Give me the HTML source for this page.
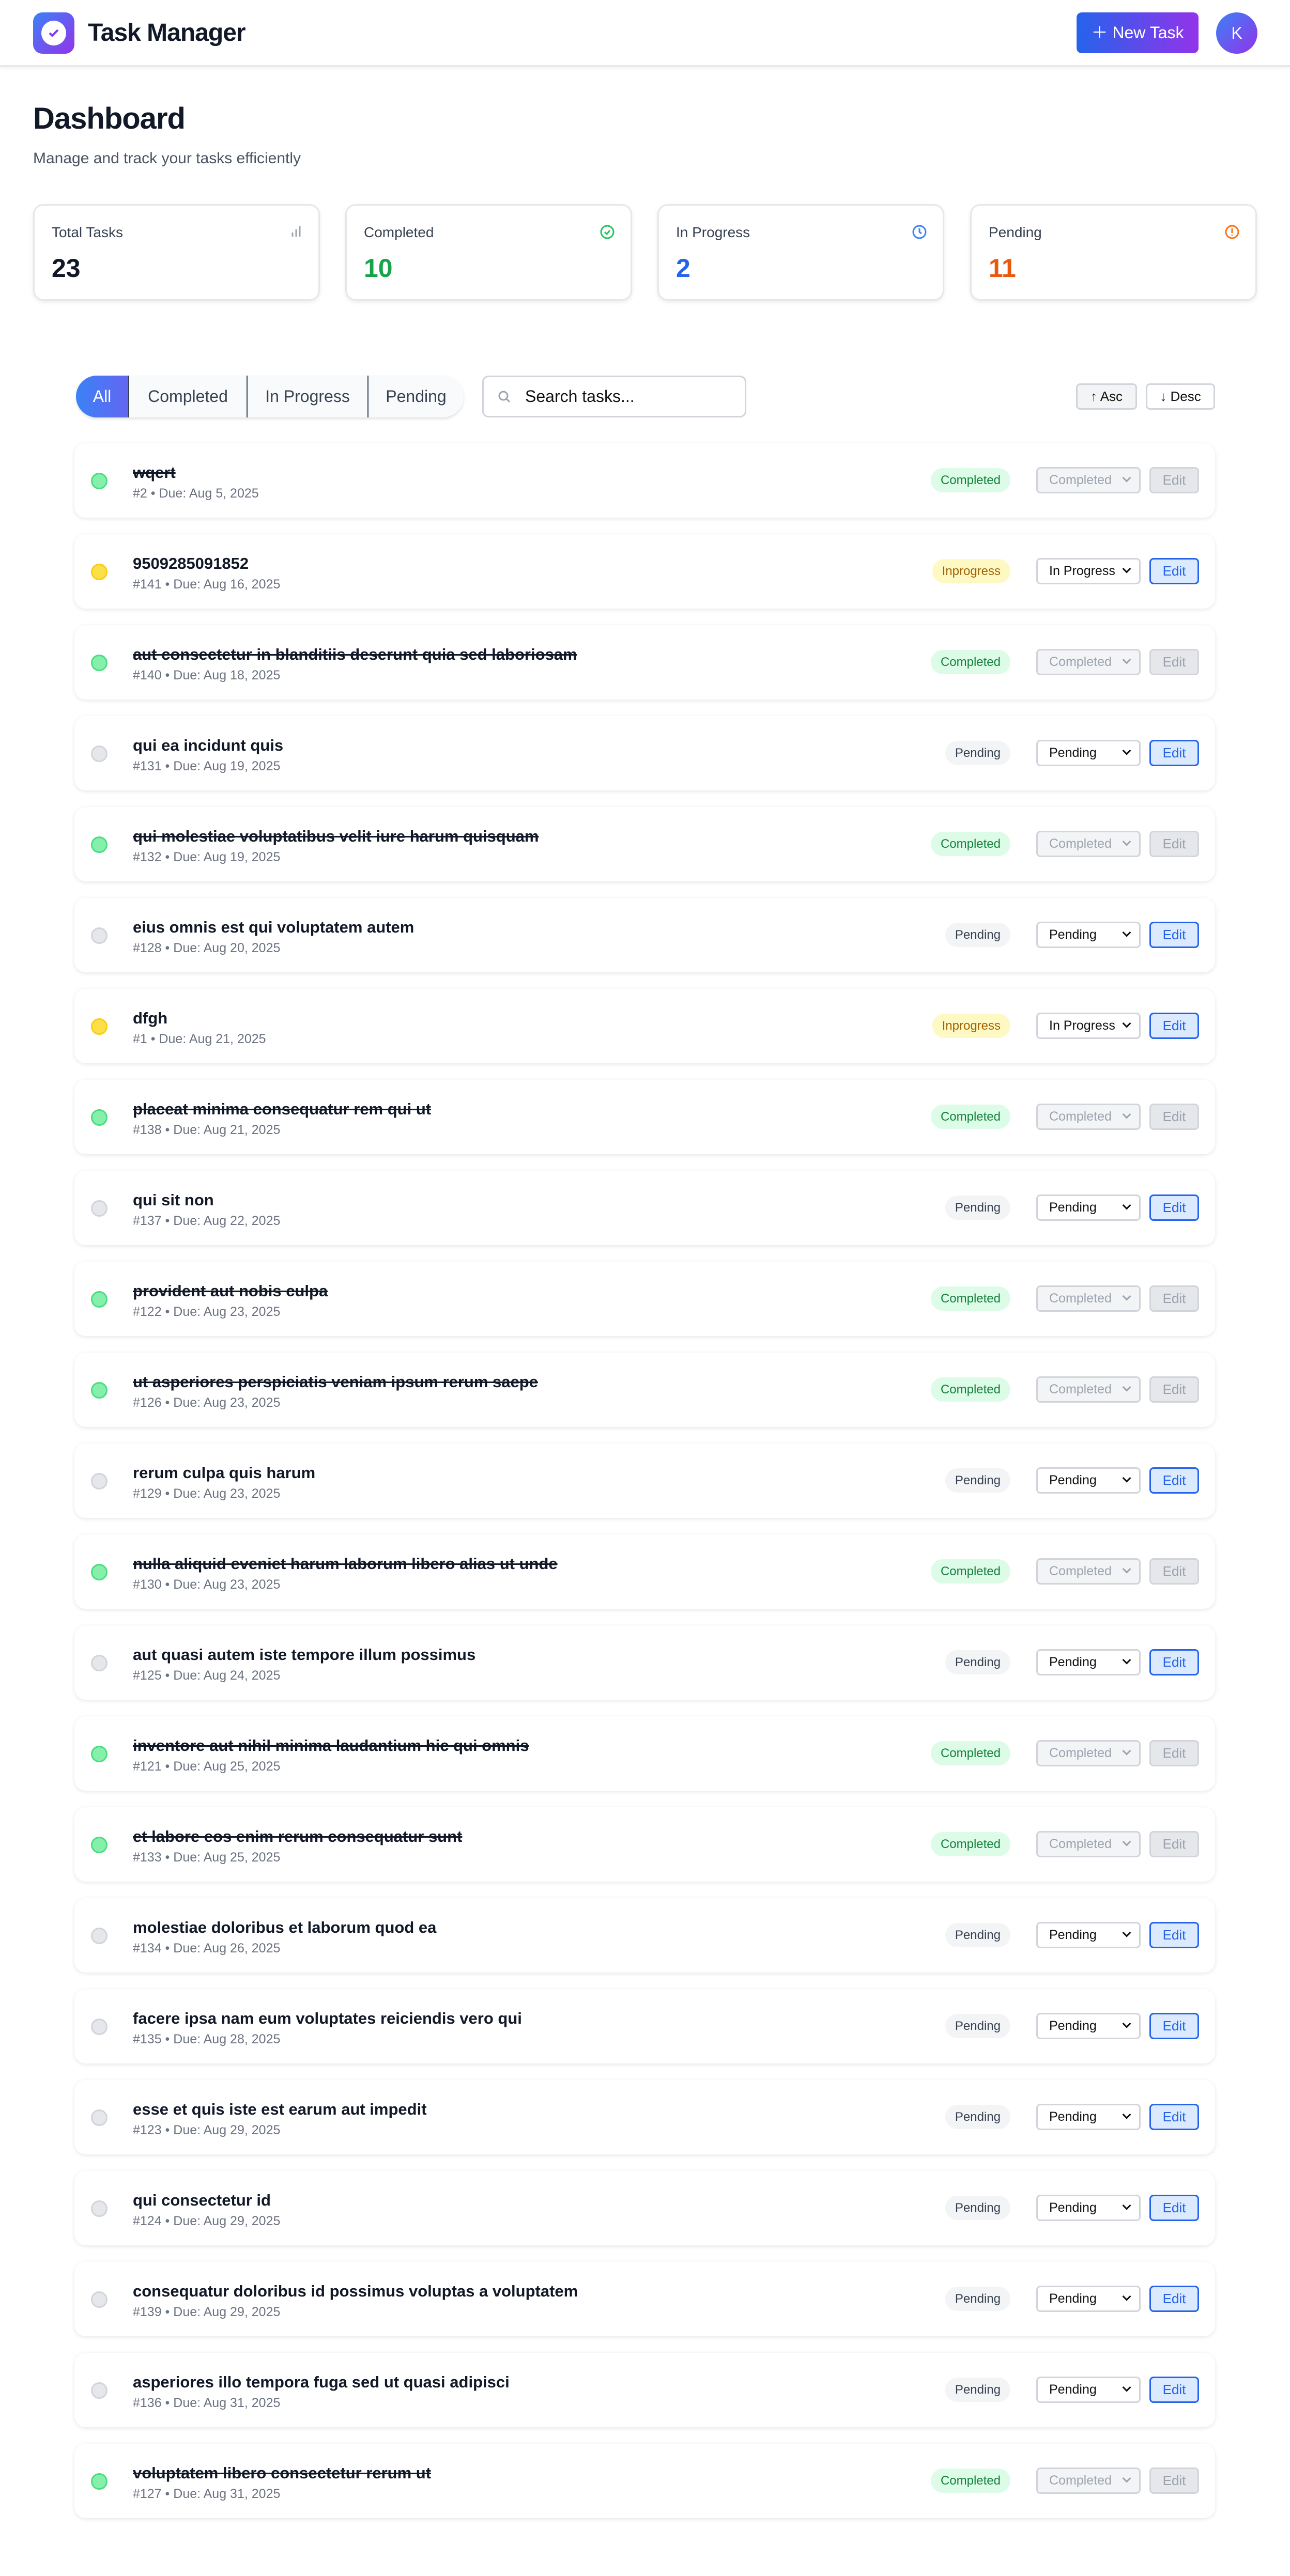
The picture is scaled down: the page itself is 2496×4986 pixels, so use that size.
<!DOCTYPE html>
<html><head><meta charset="utf-8"><style>
*{box-sizing:border-box;margin:0;padding:0}
body{width:2496px;height:4986px;background:#fff;font-family:"Liberation Sans",Arial,sans-serif;position:relative;overflow:hidden;color:#111827}
.hdr{position:absolute;left:0;top:0;width:2496px;height:129px;background:#fff;border-bottom:3px solid #e5e7eb;box-shadow:0 3px 6px rgba(0,0,0,.06)}
.logo{position:absolute;left:64px;top:24px;width:80px;height:80px;border-radius:18px;background:linear-gradient(135deg,#3b82f6,#9333ea)}
.logo i{position:absolute;left:16px;top:16px;width:48px;height:48px;border-radius:50%;background:#fff}
.ttl{position:absolute;left:170px;top:36px;font-size:48px;font-weight:bold;letter-spacing:-1px}
.nb{position:absolute;left:2083px;top:24px;width:236px;height:79px;border-radius:10px;background:linear-gradient(90deg,#2563eb,#9333ea);color:#fff;font-size:32px;line-height:79px;text-align:center}
.av{position:absolute;left:2353px;top:24px;width:80px;height:80px;border-radius:50%;background:linear-gradient(135deg,#3b82f6,#9333ea);color:#fff;font-size:32px;line-height:80px;text-align:center}
h1{position:absolute;left:64px;top:196px;font-size:58px;font-weight:bold;letter-spacing:-1px}
.sub{position:absolute;left:64px;top:290px;font-size:30px;color:#4b5563}
.st{position:absolute;top:395px;width:555px;height:187px;border:3px solid #e5e7eb;border-radius:20px;box-shadow:0 3px 8px rgba(0,0,0,.08);background:#fff}
.st .l{position:absolute;left:33px;top:36px;font-size:28px;color:#374151}
.st .n{position:absolute;left:33px;top:92px;font-size:50px;font-weight:bold}
.st svg{position:absolute;right:30px;top:36px}
.fg{position:absolute;left:147px;top:727px;width:750px;height:81px;border-radius:41px;background:#f8fafc;box-shadow:0 3px 6px rgba(0,0,0,.12);overflow:hidden;font-size:32px;color:#374151}
.fg span{position:absolute;top:0;height:81px;line-height:81px;text-align:center}
.sr{position:absolute;left:933px;top:727px;width:511px;height:81px;border:3px solid #d1d5db;border-radius:12px;font-size:32px;line-height:75px;padding-left:80px;color:#111}
.sb{position:absolute;top:742px;height:51px;border:3px solid #d1d5db;border-radius:8px;font-size:26px;line-height:45px;text-align:center;color:#111}
.c{position:absolute;left:144px;width:2207px;height:144px;border-radius:22px;background:#fff;box-shadow:0 2px 8px rgba(0,0,0,.1)}
.d{position:absolute;left:32px;top:57px;width:32px;height:32px;border-radius:50%;border:3px solid #d1d5db;background:#e5e7eb}
.C .d{background:#86efac;border-color:#4ade80}.I .d{background:#fde047;border-color:#facc15}
.t{position:absolute;left:113px;top:39px;font-size:31px;font-weight:bold;color:#111827;white-space:nowrap}
.C .t{text-decoration:line-through}
.m{position:absolute;left:113px;top:83px;font-size:25px;color:#6b7280}
.b{position:absolute;right:396px;top:48px;height:47px;line-height:47px;padding:0 19px;border-radius:24px;font-size:24px;background:#f3f4f6;color:#374151}
.C .b{background:#dcfce7;color:#15803d}.I .b{background:#fef9c3;color:#a16207}
.s{position:absolute;left:1861px;top:46px;width:202px;height:51px;border:3px solid #d1d5db;border-radius:8px;font-size:25px;line-height:45px;padding-left:22px;color:#111}
.s:after{content:"";position:absolute;right:18px;top:12px;width:9px;height:9px;border-right:3px solid #111;border-bottom:3px solid #111;transform:rotate(45deg)}
.C .s{background:#f3f4f6;color:#9ca3af}.C .s:after{border-color:#9ca3af}
.e{position:absolute;left:2080px;top:46px;width:96px;height:51px;border:3px solid #2563eb;border-radius:8px;background:#dbeafe;color:#2563eb;font-size:26px;line-height:45px;text-align:center}
.C .e{background:#e5e7eb;border-color:#d1d5db;color:#9ca3af}
</style></head><body>
<div class="hdr"><div class="logo"><i></i><svg style="position:absolute;left:28px;top:28px" width="24" height="24" viewBox="0 0 24 24"><path d="M4 12l5 5 11-11" stroke="#7c3aed" stroke-width="4" fill="none"/></svg></div>
<div class="ttl">Task Manager</div>
<div class="nb">＋ New Task</div><div class="av">K</div></div>
<h1>Dashboard</h1>
<div class="sub">Manage and track your tasks efficiently</div>
<div class="st" style="left:64px"><div class="l">Total Tasks</div><div class="n">23</div><svg width="26" height="26" viewBox="0 0 26 26"><path d="M6 24v-8M13 24v-14M20 24v-20" stroke="#9ca3af" stroke-width="3"/></svg></div>
<div class="st" style="left:668px"><div class="l">Completed</div><div class="n" style="color:#16a34a">10</div><svg width="30" height="30" viewBox="0 0 30 30"><circle cx="15" cy="15" r="12" stroke="#22c55e" stroke-width="3" fill="none"/><path d="M10 15l4 4 6-7" stroke="#22c55e" stroke-width="3" fill="none"/></svg></div>
<div class="st" style="left:1272px"><div class="l">In Progress</div><div class="n" style="color:#2563eb">2</div><svg width="30" height="30" viewBox="0 0 30 30"><circle cx="15" cy="15" r="12" stroke="#3b82f6" stroke-width="3" fill="none"/><path d="M15 8v7l4 3" stroke="#3b82f6" stroke-width="3" fill="none"/></svg></div>
<div class="st" style="left:1877px"><div class="l">Pending</div><div class="n" style="color:#ea580c">11</div><svg width="30" height="30" viewBox="0 0 30 30"><circle cx="15" cy="15" r="12" stroke="#f97316" stroke-width="3" fill="none"/><path d="M15 8v9M15 20v2" stroke="#f97316" stroke-width="3" fill="none"/></svg></div>
<div class="fg"><span style="left:0;width:101px;background:linear-gradient(90deg,#3b82f6,#6366f1);color:#fff">All</span><span style="left:101px;width:229px;border-left:2px solid #374151">Completed</span><span style="left:330px;width:234px;border-left:2px solid #374151">In Progress</span><span style="left:564px;width:186px;border-left:2px solid #374151">Pending</span></div>
<div class="sr"><svg style="position:absolute;left:26px;top:24px" width="28" height="28" viewBox="0 0 28 28"><circle cx="12" cy="12" r="8" stroke="#9ca3af" stroke-width="3" fill="none"/><path d="M18 18l6 6" stroke="#9ca3af" stroke-width="3"/></svg>Search tasks...</div>
<div class="sb" style="left:2082px;width:118px;background:#f3f4f6">↑ Asc</div>
<div class="sb" style="left:2217px;width:134px">↓ Desc</div>

<div class="c C" style="top:858px"><div class="d"></div><div class="t">wqert</div><div class="m">#2 • Due: Aug 5, 2025</div><div class="b">Completed</div><div class="s">Completed</div><div class="e">Edit</div></div>
<div class="c I" style="top:1034px"><div class="d"></div><div class="t">9509285091852</div><div class="m">#141 • Due: Aug 16, 2025</div><div class="b">Inprogress</div><div class="s">In Progress</div><div class="e">Edit</div></div>
<div class="c C" style="top:1210px"><div class="d"></div><div class="t">aut consectetur in blanditiis deserunt quia sed laboriosam</div><div class="m">#140 • Due: Aug 18, 2025</div><div class="b">Completed</div><div class="s">Completed</div><div class="e">Edit</div></div>
<div class="c P" style="top:1386px"><div class="d"></div><div class="t">qui ea incidunt quis</div><div class="m">#131 • Due: Aug 19, 2025</div><div class="b">Pending</div><div class="s">Pending</div><div class="e">Edit</div></div>
<div class="c C" style="top:1562px"><div class="d"></div><div class="t">qui molestiae voluptatibus velit iure harum quisquam</div><div class="m">#132 • Due: Aug 19, 2025</div><div class="b">Completed</div><div class="s">Completed</div><div class="e">Edit</div></div>
<div class="c P" style="top:1738px"><div class="d"></div><div class="t">eius omnis est qui voluptatem autem</div><div class="m">#128 • Due: Aug 20, 2025</div><div class="b">Pending</div><div class="s">Pending</div><div class="e">Edit</div></div>
<div class="c I" style="top:1914px"><div class="d"></div><div class="t">dfgh</div><div class="m">#1 • Due: Aug 21, 2025</div><div class="b">Inprogress</div><div class="s">In Progress</div><div class="e">Edit</div></div>
<div class="c C" style="top:2090px"><div class="d"></div><div class="t">placeat minima consequatur rem qui ut</div><div class="m">#138 • Due: Aug 21, 2025</div><div class="b">Completed</div><div class="s">Completed</div><div class="e">Edit</div></div>
<div class="c P" style="top:2266px"><div class="d"></div><div class="t">qui sit non</div><div class="m">#137 • Due: Aug 22, 2025</div><div class="b">Pending</div><div class="s">Pending</div><div class="e">Edit</div></div>
<div class="c C" style="top:2442px"><div class="d"></div><div class="t">provident aut nobis culpa</div><div class="m">#122 • Due: Aug 23, 2025</div><div class="b">Completed</div><div class="s">Completed</div><div class="e">Edit</div></div>
<div class="c C" style="top:2618px"><div class="d"></div><div class="t">ut asperiores perspiciatis veniam ipsum rerum saepe</div><div class="m">#126 • Due: Aug 23, 2025</div><div class="b">Completed</div><div class="s">Completed</div><div class="e">Edit</div></div>
<div class="c P" style="top:2794px"><div class="d"></div><div class="t">rerum culpa quis harum</div><div class="m">#129 • Due: Aug 23, 2025</div><div class="b">Pending</div><div class="s">Pending</div><div class="e">Edit</div></div>
<div class="c C" style="top:2970px"><div class="d"></div><div class="t">nulla aliquid eveniet harum laborum libero alias ut unde</div><div class="m">#130 • Due: Aug 23, 2025</div><div class="b">Completed</div><div class="s">Completed</div><div class="e">Edit</div></div>
<div class="c P" style="top:3146px"><div class="d"></div><div class="t">aut quasi autem iste tempore illum possimus</div><div class="m">#125 • Due: Aug 24, 2025</div><div class="b">Pending</div><div class="s">Pending</div><div class="e">Edit</div></div>
<div class="c C" style="top:3322px"><div class="d"></div><div class="t">inventore aut nihil minima laudantium hic qui omnis</div><div class="m">#121 • Due: Aug 25, 2025</div><div class="b">Completed</div><div class="s">Completed</div><div class="e">Edit</div></div>
<div class="c C" style="top:3498px"><div class="d"></div><div class="t">et labore eos enim rerum consequatur sunt</div><div class="m">#133 • Due: Aug 25, 2025</div><div class="b">Completed</div><div class="s">Completed</div><div class="e">Edit</div></div>
<div class="c P" style="top:3674px"><div class="d"></div><div class="t">molestiae doloribus et laborum quod ea</div><div class="m">#134 • Due: Aug 26, 2025</div><div class="b">Pending</div><div class="s">Pending</div><div class="e">Edit</div></div>
<div class="c P" style="top:3850px"><div class="d"></div><div class="t">facere ipsa nam eum voluptates reiciendis vero qui</div><div class="m">#135 • Due: Aug 28, 2025</div><div class="b">Pending</div><div class="s">Pending</div><div class="e">Edit</div></div>
<div class="c P" style="top:4026px"><div class="d"></div><div class="t">esse et quis iste est earum aut impedit</div><div class="m">#123 • Due: Aug 29, 2025</div><div class="b">Pending</div><div class="s">Pending</div><div class="e">Edit</div></div>
<div class="c P" style="top:4202px"><div class="d"></div><div class="t">qui consectetur id</div><div class="m">#124 • Due: Aug 29, 2025</div><div class="b">Pending</div><div class="s">Pending</div><div class="e">Edit</div></div>
<div class="c P" style="top:4378px"><div class="d"></div><div class="t">consequatur doloribus id possimus voluptas a voluptatem</div><div class="m">#139 • Due: Aug 29, 2025</div><div class="b">Pending</div><div class="s">Pending</div><div class="e">Edit</div></div>
<div class="c P" style="top:4554px"><div class="d"></div><div class="t">asperiores illo tempora fuga sed ut quasi adipisci</div><div class="m">#136 • Due: Aug 31, 2025</div><div class="b">Pending</div><div class="s">Pending</div><div class="e">Edit</div></div>
<div class="c C" style="top:4730px"><div class="d"></div><div class="t">voluptatem libero consectetur rerum ut</div><div class="m">#127 • Due: Aug 31, 2025</div><div class="b">Completed</div><div class="s">Completed</div><div class="e">Edit</div></div>
</body></html>
